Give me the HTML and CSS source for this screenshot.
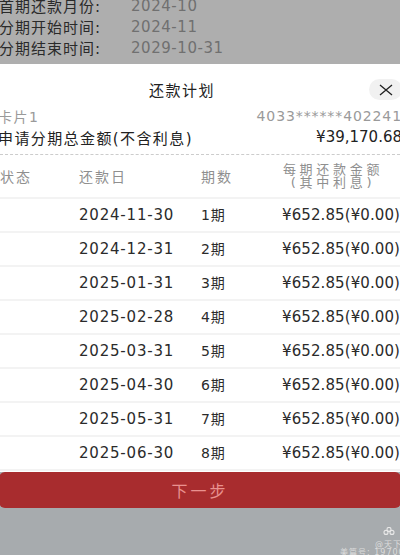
FILE: index.html
```html
<html>
  <head>
    <meta charset="utf-8" />
    <meta name="viewport" content="width=device-width, initial-scale=1.0" />
    <title>还款计划</title>
    <link rel="stylesheet" href="styles.css">
  </head>
  <body>
    <div class="wrapper">
      <div class="info">
        <div class="info-row"><label>首期还款月份:</label><span>2024-10</span></div>
        <div class="info-row"><label>分期开始时间:</label><span>2024-11</span></div>
        <div class="info-row"><label>分期结束时间:</label><span>2029-10-31</span></div>
      </div>
      <div class="sheet">
        <div class="title">
          <span>还款计划</span>
          <div class="close">
            <svg width="14" height="12" viewBox="0 0 14 12"><path d="M1 1L13 11M13 1L1 11" stroke="#222" stroke-width="1.3" fill="none" /></svg>
          </div>
        </div>
        <div class="card"><span>卡片1</span><span class="card-no">4033******402241</span></div>
        <div class="total"><span>申请分期总金额(不含利息)</span><span class="sum">¥39,170.68</span></div>
        <div class="row head">
          <div class="c1">状态</div>
          <div class="c2">还款日</div>
          <div class="c3">期数</div>
          <div class="c4">每期还款金额<br />(其中利息)</div>
        </div>
        <div class="row"><div class="c1"></div><div class="c2">2024-11-30</div><div class="c3">1期</div><div class="c4">¥652.85(¥0.00)</div></div>
        <div class="row"><div class="c1"></div><div class="c2">2024-12-31</div><div class="c3">2期</div><div class="c4">¥652.85(¥0.00)</div></div>
        <div class="row"><div class="c1"></div><div class="c2">2025-01-31</div><div class="c3">3期</div><div class="c4">¥652.85(¥0.00)</div></div>
        <div class="row"><div class="c1"></div><div class="c2">2025-02-28</div><div class="c3">4期</div><div class="c4">¥652.85(¥0.00)</div></div>
        <div class="row"><div class="c1"></div><div class="c2">2025-03-31</div><div class="c3">5期</div><div class="c4">¥652.85(¥0.00)</div></div>
        <div class="row"><div class="c1"></div><div class="c2">2025-04-30</div><div class="c3">6期</div><div class="c4">¥652.85(¥0.00)</div></div>
        <div class="row"><div class="c1"></div><div class="c2">2025-05-31</div><div class="c3">7期</div><div class="c4">¥652.85(¥0.00)</div></div>
        <div class="row"><div class="c1"></div><div class="c2">2025-06-30</div><div class="c3">8期</div><div class="c4">¥652.85(¥0.00)</div></div>
      </div>
      <div class="footer">
        <div class="next">下一步</div>
        <div class="mark">
          <svg class="mark-icon" width="12" height="8" viewBox="0 0 12 8"><circle cx="6" cy="2.4" r="2" fill="none" stroke="#e8e8e8" stroke-width="1.1" /><circle cx="3" cy="5.4" r="2" fill="none" stroke="#e8e8e8" stroke-width="1.1" /><circle cx="9" cy="5.4" r="2" fill="none" stroke="#e8e8e8" stroke-width="1.1" /></svg>
          <div class="mark-at">@天下</div>
          <div>美篇号: 19700</div>
        </div>
      </div>
    </div>
  </body>
</html>
```

FILE: styles.css
```css
* {
  margin: 0;
  padding: 0;
  box-sizing: border-box;
}
html,
body {
  width: 400px;
  height: 555px;
  overflow: hidden;
}
body {
  background: #a7abae;
}
.wrapper {
  font-family: "DejaVu Sans", "Noto Sans CJK SC", sans-serif;
  font-size: 15px;
  color: #222;
}
.info {
  display: flow-root;
  height: 64px;
  background: #aeaeae;
}
.info-row {
  display: flex;
  height: 21px;
  align-items: center;
  color: #2a2a2a;
}
.info-row:first-child {
  margin-top: -5px;
}
.info-row label {
  width: 132px;
  margin-left: -1px;
  letter-spacing: 1px;
}
.info-row span {
  color: #707070;
  letter-spacing: 0.55px;
}
.sheet {
  background: #fff;
  height: 408px;
}
.title {
  display: flex;
  align-items: center;
  justify-content: center;
  height: 41px;
  padding-top: 9px;
  padding-right: 36px;
  position: relative;
  letter-spacing: 1.5px;
}
.close {
  position: absolute;
  right: -2px;
  top: 15px;
  width: 33px;
  height: 21px;
  border-radius: 11px;
  background: #f1f1f1;
  display: flex;
  align-items: center;
  justify-content: center;
}
.card,
.total {
  display: flex;
  justify-content: space-between;
  align-items: center;
  height: 22px;
  margin-left: -2px;
  margin-right: -2px;
}
.card {
  height: 21px;
  font-size: 14px;
  color: #9a9a9a;
  letter-spacing: 1.5px;
}
.card-no {
  letter-spacing: 0.9px;
}
.total {
  letter-spacing: 1.4px;
  margin-bottom: 6px;
}
.sum {
  letter-spacing: 0;
}
.row {
  display: flex;
  align-items: center;
  height: 34px;
  border-bottom: 2px solid #f3f3f3;
  letter-spacing: 0.8px;
  color: #2b2b2b;
}
.head {
  height: 45px;
  border-top: 1px dashed #ccc;
  font-size: 14px;
  color: #8f8f8f;
  letter-spacing: 2px;
}
.c1 {
  width: 79px;
  flex-shrink: 0;
}
.c2 {
  width: 122px;
  flex-shrink: 0;
}
.c3 {
  width: 81px;
  flex-shrink: 0;
  font-size: 14px;
  padding-bottom: 3px;
}
.c4 {
  white-space: nowrap;
  letter-spacing: 0.1px;
}
.head .c1,
.head .c2,
.head .c3 {
  padding-bottom: 0;
}
.head .c4 {
  width: 102px;
  font-size: 13px;
  line-height: 13px;
  letter-spacing: 3.7px;
  text-align: center;
}
.next {
  height: 36px;
  margin-left: -1px;
  margin-right: -1px;
  background: #a82c2e;
  color: #e9918f;
  border-radius: 6px;
  font-size: 16px;
  letter-spacing: 3px;
  display: flex;
  align-items: center;
  justify-content: center;
}
.footer {
  position: relative;
}
.mark {
  position: absolute;
  left: 340px;
  top: 55px;
  white-space: nowrap;
  font-size: 8px;
  line-height: 8px;
  letter-spacing: 1px;
  color: #dcdcdc;
}
.mark-icon {
  display: block;
  margin-left: 43px;
  margin-bottom: 6px;
}
.mark-at {
  padding-left: 35px;
}
```
